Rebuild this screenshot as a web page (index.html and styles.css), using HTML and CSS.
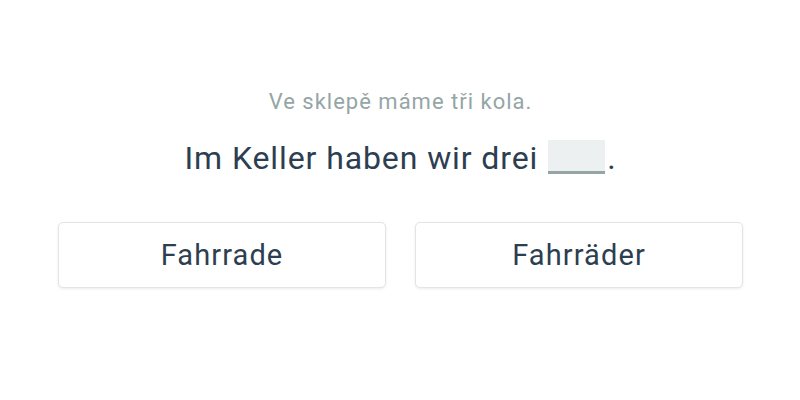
FILE: index.html
```html
<html>
    <head>
        <meta name="viewport" content="width=device-width, initial-scale=1" />
        <link rel="stylesheet" href="styles.css">
    </head>
    <body>
        <div id="exercise">
            <div class="translation">Ve sklepě máme tři kola.</div>
            <div class="sentence">Im Keller haben wir drei <span class="blank"></span>.</div>
            <div class="answers">
                <button class="answer">Fahrrade</button>
                <button class="answer">Fahrräder</button>
            </div>
        </div>
    </body>
</html>
```

FILE: styles.css
```css
body {
    margin: 0px;
    padding: 0px;
    font-family: Roboto, "Liberation Sans", sans-serif;
    color: #2c3e50;
    background: white;
}

#exercise {
    padding: 88px 57px 0px 58px;
    text-align: center;
}

.translation {
    font-size: 22px;
    letter-spacing: 1px;
    color: #95a5a6;
    line-height: 28px;
}

.sentence {
    font-size: 32px;
    letter-spacing: 0.9px;
    line-height: 40px;
    margin-top: 22px;
}

.blank {
    display: inline-block;
    width: 57px;
    height: 31px;
    background: #ecf0f1;
    border-bottom: 3px solid #95a5a6;
    vertical-align: -5px;
    margin-left: 1px;
    margin-right: 2px;
}

.answers {
    display: flex;
    gap: 29px;
    margin-top: 44px;
}

.answer {
    flex: 1;
    height: 66px;
    background: white;
    border: 1px solid #e2e4e6;
    border-radius: 5px;
    box-shadow: 0px 1px 3px rgba(0, 0, 0, 0.08);
    font-family: Roboto, "Liberation Sans", sans-serif;
    font-size: 29px;
    letter-spacing: 1.1px;
    color: #2c3e50;
}
```
